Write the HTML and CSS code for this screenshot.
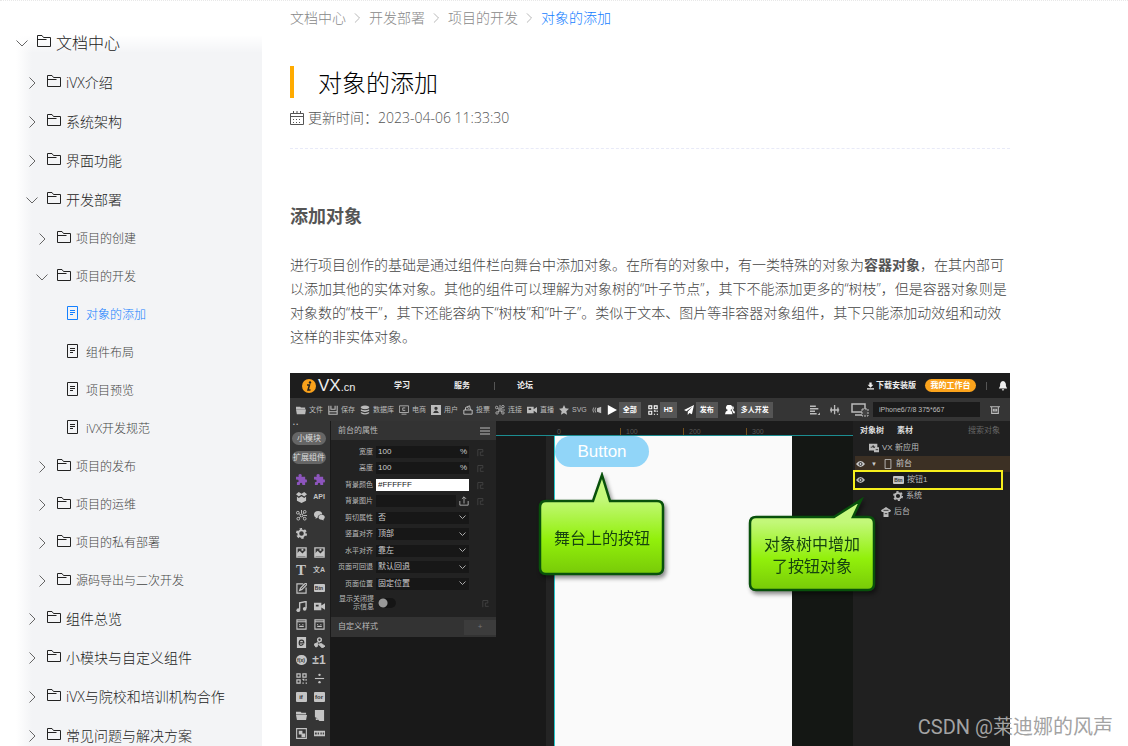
FILE: index.html
```
<!DOCTYPE html>
<html lang="zh">
<head>
<meta charset="utf-8">
<meta name="viewport" content="width=device-width, initial-scale=1">
<title>对象的添加</title>
<link rel="stylesheet" href="styles.css">
</head>
<body>
<svg class="defs" aria-hidden="true">
  <symbol id="folder" viewBox="0 0 14 14"><path d="M.5 1.500h4.500l1.500 2h7v9h-13zM.5 5.500h9" fill="none" stroke="currentColor"/></symbol>
  <symbol id="file" viewBox="0 0 14 14"><path d="M1.500.500h10v13h-10zM4 4.500h5M4 6.500h5M4 8.500h3" fill="none" stroke="currentColor"/></symbol>
  <symbol id="right" viewBox="0 0 12 12"><path d="M3.500 .5L9 6l-5.500 5.500" fill="none" stroke="currentColor"/></symbol>
  <symbol id="down" viewBox="0 0 12 12"><path d="M.5 3.500L6 9l5.500-5.500" fill="none" stroke="currentColor"/></symbol>
  <symbol id="s-folder" viewBox="0 0 12 12"><path d="M0 2h5l1 1h5v2H0zM0 5.500h12L11 11H1z" fill="currentColor"/></symbol>
  <symbol id="s-save" viewBox="0 0 12 12"><path d="M1 1v10h10V1M3.500 1v4h5V1M1 8h10" fill="none" stroke="currentColor" stroke-width="1.300"/></symbol>
  <symbol id="s-db" viewBox="0 0 12 12"><path d="M1 2q5-3 10 0v1.500q-5 3-10 0zM1 5q5 2.500 10 0v2q-5 2.500-10 0zM1 8.500q5 2.500 10 0V10q-5 3-10 0z" fill="currentColor"/></symbol>
  <symbol id="s-screen" viewBox="0 0 12 12"><path d="M.5 1h11v8H.5zM3 11h6M7.500 3.500h-3v3h3" fill="none" stroke="currentColor"/></symbol>
  <symbol id="s-user" viewBox="0 0 12 12"><path fill-rule="evenodd" d="M0 0h12v12H0zM6 2a2 2 0 000 4 2 2 0 000-4M2.500 9.500h7q-1-3-3.500-3t-3.500 3" fill="currentColor"/></symbol>
  <symbol id="s-vote" viewBox="0 0 12 12"><path d="M1 6h10v5H1zM3 6V3l5-2 1 5M5 3l2 1" fill="none" stroke="currentColor" stroke-width="1.200"/></symbol>
  <symbol id="s-link" viewBox="0 0 12 12"><g fill="none" stroke="currentColor"><circle cx="2" cy="3" r="1.500"/><circle cx="9.500" cy="2" r="1.500"/><circle cx="2.500" cy="9.500" r="1.500"/><circle cx="9.500" cy="9.500" r="1.500"/><circle cx="6" cy="6" r="1.500"/><path d="M3 4l2 1M7 5l1.500-2M5 7L3.500 8.500M7 7l1.500 1.500M8 6h4M6 0v4"/></g></symbol>
  <symbol id="s-live" viewBox="0 0 12 12"><path fill-rule="evenodd" d="M0 2h8v3l4-2.500v7L8 7v3H0zM2 4v2h3V4z" fill="currentColor"/></symbol>
  <symbol id="s-star" viewBox="0 0 12 12"><path d="M6 0l1.800 4 4.200.500-3.200 2.900.9 4.300L6 9.600l-3.700 2.100.9-4.300L0 4.500 4.200 4z" fill="currentColor"/></symbol>
  <symbol id="s-sound" viewBox="0 0 12 12"><path d="M2 3q-2 3 0 6M4.500 3q-2 3 0 6" fill="none" stroke="currentColor"/><path d="M11 2v8L6 8V4z" fill="currentColor"/></symbol>
  <symbol id="s-play" viewBox="0 0 12 12"><path d="M1 0l11 6-11 6z" fill="currentColor"/></symbol>
  <symbol id="s-qr" viewBox="0 0 12 12"><path d="M1 1h3.500v3.500H1zM7.500 1H11v3.500H7.500zM1 7.500h3.500V11H1zM7 7h1.500v1.500M11 6.500v2M7 11h1.500M10.500 11H12" fill="none" stroke="currentColor" stroke-width="1.300"/></symbol>
  <symbol id="s-plane" viewBox="0 0 12 12"><path d="M12 0L0 6l3 1.500L10 2 4.500 8v4L6.500 9.500 9.500 11z" fill="currentColor"/></symbol>
  <symbol id="s-people" viewBox="0 0 12 12"><path d="M5 0a3 3 0 00-1.500 6Q0 8 0 11h9Q9 8 6.500 6A3 3 0 005 0M9 1q3 2 .5 5Q12 7 12 10h-2Q9 7 8 6.500 9.500 4 9 1" fill="currentColor"/></symbol>
  <symbol id="s-align" viewBox="0 0 12 12"><path d="M0 1.500h7M0 4.500h10M0 7.500h6M0 10.500h8" stroke="currentColor" stroke-width="1.600"/><path d="M12 9v3H9z" fill="currentColor"/></symbol>
  <symbol id="s-dist" viewBox="0 0 12 12"><path d="M1.500 3v6M5.500 0v11M9.500 3v6M0 6h11" stroke="currentColor" stroke-width="1.600"/><path d="M12 10v2h-2z" fill="currentColor"/></symbol>
  <symbol id="s-device" viewBox="0 0 18 14"><path d="M1 1h13v8H1zM4 12h7" fill="none" stroke="currentColor" stroke-width="1.500"/><path d="M11 6h6v7h-6z" fill="#444" stroke="currentColor" stroke-dasharray="2 1"/></symbol>
  <symbol id="s-crop" viewBox="0 0 12 12"><path d="M0 2h12M2 2v8h8V2M4 5h4v2H4z" fill="none" stroke="currentColor" stroke-width="1.300"/></symbol>
  <symbol id="s-bell" viewBox="0 0 12 12"><path d="M6 0Q2 1 2.500 6L1 9h10L9.500 6Q10 1 6 0M4.500 10h3L6 12z" fill="currentColor"/></symbol>
  <symbol id="s-load" viewBox="0 0 12 12"><path d="M4 0h4v4h3L6 9 1 4h3zM0 10h12v2H0z" fill="currentColor"/></symbol>
  <symbol id="s-puzzle" viewBox="0 0 12 12"><path d="M0 3h3Q2 0 4.500 0T6 3h4v3q2-1 2 1.500T10 9v3H7q0-2.500-1.500-2.500T4 12H1V9q2 0 2-1.500T0 6z" fill="currentColor"/></symbol>
  <symbol id="s-box" viewBox="0 0 12 12"><path d="M3 0l3 2 3-2 3 2.500L9 5 6 3 3 5 0 2.500zM1 5l2 1.500 3-2 3 2L11 5v4.500L6 12 1 9.500z" fill="currentColor"/></symbol>
  <symbol id="s-chat" viewBox="0 0 12 12"><path d="M4.500 1C-1 1-1 7 2 8L1.500 9.500 4 8.500Q4 4.500 9 4.500 8.500 1 4.500 1M8.500 5.300c-5 0-4.500 5.500 0 5.200l2 1V10C13 8 11.500 5.300 8.500 5.300" fill="currentColor"/></symbol>
  <symbol id="s-gear" viewBox="0 0 12 12"><circle cx="6" cy="6" r="3.500" fill="none" stroke="currentColor" stroke-width="2"/><circle cx="6" cy="6" r="5" fill="none" stroke="currentColor" stroke-width="2" stroke-dasharray="2.600 2.636"/></symbol>
  <symbol id="s-pic" viewBox="0 0 12 12"><path d="M1 1h10v10H1z" fill="none" stroke="currentColor" stroke-width="1.500"/><path d="M1 10V7l3-3 3 3 3-3 1 1v5zM6 2h2v2H6z" fill="currentColor"/></symbol>
  <symbol id="s-edit" viewBox="0 0 12 12"><path d="M8 1H1v10h10V5M4 8l1-2.500L10.500 0 12 1.500 6.500 7z" fill="none" stroke="currentColor" stroke-width="1.300"/></symbol>
  <symbol id="s-note" viewBox="0 0 12 12"><path d="M4 9.500V2l7-1.500V8" fill="none" stroke="currentColor" stroke-width="1.500"/><circle cx="2.500" cy="10" r="2" fill="currentColor"/><circle cx="9.500" cy="8.500" r="2" fill="currentColor"/></symbol>
  <symbol id="s-window" viewBox="0 0 12 12"><path d="M1 1h10v10H1zM1 3h10M3.500 8h5M3.500 6h1M7 6h1" fill="none" stroke="currentColor" stroke-width="1.200"/></symbol>
  <symbol id="s-web" viewBox="0 0 12 12"><path d="M1 0h10v12H1z" fill="currentColor"/><path d="M3.500 6.500h5Q8.500 3.500 6 3.500T3.500 6.500 6 9l2-1" fill="none" stroke="#333" stroke-width="1.300"/></symbol>
  <symbol id="s-map" viewBox="0 0 12 12"><circle cx="6" cy="3" r="2" fill="none" stroke="currentColor" stroke-width="1.500"/><path d="M5.500 5v2M0 8l4-2v4l-2 1zM5 8l3-1 4 3-3 2z" fill="currentColor" stroke="currentColor"/></symbol>
  <symbol id="s-div" viewBox="0 0 12 12"><path d="M1 6h10" stroke="currentColor" stroke-width="1.200"/><circle cx="6" cy="2" r="1.300" fill="currentColor"/><circle cx="6" cy="10" r="1.300" fill="currentColor"/></symbol>
  <symbol id="s-paper" viewBox="0 0 12 12"><path d="M1 0h10v12H6L1 7.500zM2 8v3h3z" fill="currentColor"/></symbol>
  <symbol id="s-copy" viewBox="0 0 12 12"><path d="M.7.700h10.600v10.600H.7z" fill="none" stroke="currentColor" stroke-width="1.200"/><path d="M3 3h4v4H3zM6 6h4v4H6z" fill="currentColor"/></symbol>
  <symbol id="s-strip" viewBox="0 0 12 12"><path d="M0 3h12v6H0z" fill="currentColor"/><path d="M1 6h2M4 6h1.500M7 6h1.500M9.500 6H11" stroke="#444" stroke-width="2"/></symbol>
  <symbol id="s-eye" viewBox="0 0 12 12"><path d="M0 6q6-8 12 0-6 8-12 0" fill="currentColor"/><circle cx="6" cy="6" r="2" fill="none" stroke="#222" stroke-width="1.200"/></symbol>
  <symbol id="s-phone" viewBox="0 0 12 12"><path d="M2.500.500h7v11h-7z" fill="none" stroke="currentColor"/></symbol>
  <symbol id="s-app" viewBox="0 0 12 12"><path d="M0 1h10v4h2v6H6V9H0z" fill="currentColor"/><path d="M2 5h2l1-2 1 3 1-2M8 8h3" fill="none" stroke="#222"/></symbol>
  <symbol id="s-pot" viewBox="0 0 12 12"><path d="M0 4l6-4 6 4-1 2H1zM3 6h6v6H3z" fill="currentColor"/><path d="M3 4h6M4.500 8h3" stroke="#222"/></symbol>
  <symbol id="s-key" viewBox="0 0 12 12"><path d="M1 11V3M1 3h6v3H4v4h4" fill="none" stroke="currentColor"/></symbol>
  <symbol id="s-up" viewBox="0 0 12 12"><path d="M1 6v5h10V6M6 9V1M3.500 3.500L6 1l2.500 2.500" fill="none" stroke="currentColor"/></symbol>
</svg>

<div class="page">
  <nav class="sidebar" aria-label="文档目录">
    <ul class="tree">
      <li><a class="node root" href="#"><svg class="chev"><use href="#down"/></svg><svg class="ico"><use href="#folder"/></svg>文档中心</a>
        <ul class="l1">
          <li><a class="node" href="#"><svg class="chev"><use href="#right"/></svg><svg class="ico"><use href="#folder"/></svg>iVX介绍</a></li>
          <li><a class="node" href="#"><svg class="chev"><use href="#right"/></svg><svg class="ico"><use href="#folder"/></svg>系统架构</a></li>
          <li><a class="node" href="#"><svg class="chev"><use href="#right"/></svg><svg class="ico"><use href="#folder"/></svg>界面功能</a></li>
          <li><a class="node" href="#"><svg class="chev"><use href="#down"/></svg><svg class="ico"><use href="#folder"/></svg>开发部署</a>
            <ul class="l2">
              <li><a class="node" href="#"><svg class="chev"><use href="#right"/></svg><svg class="ico"><use href="#folder"/></svg>项目的创建</a></li>
              <li><a class="node" href="#"><svg class="chev"><use href="#down"/></svg><svg class="ico"><use href="#folder"/></svg>项目的开发</a>
                <ul class="l3">
                  <li><a class="node current" href="#" aria-current="page"><svg class="ico"><use href="#file"/></svg>对象的添加</a></li>
                  <li><a class="node" href="#"><svg class="ico"><use href="#file"/></svg>组件布局</a></li>
                  <li><a class="node" href="#"><svg class="ico"><use href="#file"/></svg>项目预览</a></li>
                  <li><a class="node" href="#"><svg class="ico"><use href="#file"/></svg>iVX开发规范</a></li>
                </ul>
              </li>
              <li><a class="node" href="#"><svg class="chev"><use href="#right"/></svg><svg class="ico"><use href="#folder"/></svg>项目的发布</a></li>
              <li><a class="node" href="#"><svg class="chev"><use href="#right"/></svg><svg class="ico"><use href="#folder"/></svg>项目的运维</a></li>
              <li><a class="node" href="#"><svg class="chev"><use href="#right"/></svg><svg class="ico"><use href="#folder"/></svg>项目的私有部署</a></li>
              <li><a class="node" href="#"><svg class="chev"><use href="#right"/></svg><svg class="ico"><use href="#folder"/></svg>源码导出与二次开发</a></li>
            </ul>
          </li>
          <li><a class="node" href="#"><svg class="chev"><use href="#right"/></svg><svg class="ico"><use href="#folder"/></svg>组件总览</a></li>
          <li><a class="node" href="#"><svg class="chev"><use href="#right"/></svg><svg class="ico"><use href="#folder"/></svg>小模块与自定义组件</a></li>
          <li><a class="node" href="#"><svg class="chev"><use href="#right"/></svg><svg class="ico"><use href="#folder"/></svg>iVX与院校和培训机构合作</a></li>
          <li><a class="node" href="#"><svg class="chev"><use href="#right"/></svg><svg class="ico"><use href="#folder"/></svg>常见问题与解决方案</a></li>
        </ul>
      </li>
    </ul>
  </nav>

  <main class="content">
    <nav class="crumbs" aria-label="面包屑">
      <a href="#">文档中心</a><svg><use href="#right"/></svg><a href="#">开发部署</a><svg><use href="#right"/></svg><a href="#">项目的开发</a><svg><use href="#right"/></svg><a class="current" href="#">对象的添加</a>
    </nav>
    <h1>对象的添加</h1>
    <p class="updated"><svg viewBox="0 0 14 14"><path d="M.5 2.500h13v11H.5zM.5 5.500h13M3.500 0v3M7 0v3M10.500 0v3" fill="none" stroke="currentColor"/><path d="M3 8.500h8M3 11.500h8" fill="none" stroke="currentColor" stroke-dasharray="1 2"/></svg>更新时间：2023-04-06 11:33:30</p>
    <h2>添加对象</h2>
    <p class="intro">进行项目创作的基础是通过组件栏向舞台中添加对象。在所有的对象中，有一类特殊的对象为<strong>容器对象</strong>，在其内部可以添加其他的实体对象。其他的组件可以理解为对象树的“叶子节点”，其下不能添加更多的“树枝”，但是容器对象则是对象数的“枝干”，其下还能容纳下“树枝”和“叶子”。类似于文本、图片等非容器对象组件，其下只能添加动效组和动效这样的非实体对象。</p>

    <div class="shot">
      <header class="top">
        <div class="logo"><svg viewBox="0 0 14 14"><circle cx="7" cy="7" r="7" fill="#f9a11b"/><circle cx="8" cy="3.500" r="1.200" fill="#222"/><path d="M5 6h2.500L6 11h2.500" fill="none" stroke="#222" stroke-width="1.500"/></svg><b>VX</b><span>.cn</span></div>
        <a href="#">学习</a><a href="#">服务</a><i></i><a href="#">论坛</a>
        <div class="account"><a href="#"><svg><use href="#s-load"/></svg>下载安装版</a><button class="bench">我的工作台</button><i></i><svg class="bell"><use href="#s-bell"/></svg></div>
      </header>
      <div class="bar">
        <span><svg><use href="#s-folder"/></svg>文件</span><span><svg><use href="#s-save"/></svg>保存</span><span><svg><use href="#s-db"/></svg>数据库</span><span><svg><use href="#s-screen"/></svg>电商</span><span><svg><use href="#s-user"/></svg>用户</span><span><svg><use href="#s-vote"/></svg>投票</span><span><svg><use href="#s-link"/></svg>连接</span><span><svg><use href="#s-live"/></svg>直播</span><span><svg><use href="#s-star"/></svg>SVG</span><span><svg><use href="#s-sound"/></svg></span>
        <span class="lit"><svg><use href="#s-play"/></svg><button>全部</button></span><span class="lit"><svg><use href="#s-qr"/></svg><button>H5</button></span><span class="lit"><svg><use href="#s-plane"/></svg><button>发布</button></span><span class="lit"><svg><use href="#s-people"/></svg><button>多人开发</button></span>
        <div class="view"><svg><use href="#s-align"/></svg><svg><use href="#s-dist"/></svg><svg class="device"><use href="#s-device"/></svg><input aria-label="设备" value="iPhone6/7/8 375*667"><svg><use href="#s-crop"/></svg></div>
      </div>
      <div class="body">
        <aside class="tools">
          <div class="dots">• •</div>
          <button>小模块</button><button>扩展组件</button>
          <div class="set">
            <svg class="violet"><use href="#s-puzzle"/></svg><svg class="violet"><use href="#s-puzzle"/></svg>
            <svg><use href="#s-box"/></svg><b>API</b>
            <svg><use href="#s-link"/></svg><svg><use href="#s-chat"/></svg>
            <svg><use href="#s-gear"/></svg>
          </div>
          <div class="set">
            <svg><use href="#s-pic"/></svg><svg><use href="#s-pic"/></svg>
            <b class="big serif">T</b><b class="zh">文A</b>
            <svg><use href="#s-edit"/></svg><b class="chip">Btn</b>
            <svg><use href="#s-note"/></svg><svg><use href="#s-live"/></svg>
            <svg><use href="#s-window"/></svg><svg><use href="#s-window"/></svg>
            <svg><use href="#s-web"/></svg><svg><use href="#s-map"/></svg>
            <b class="chip round">f(x)</b><b class="big">±1</b>
            <svg><use href="#s-qr"/></svg><svg><use href="#s-div"/></svg>
          </div>
          <div class="set">
            <b class="chip tall">if</b><b class="chip tall">for</b>
            <svg><use href="#s-folder"/></svg><svg><use href="#s-paper"/></svg>
            <svg><use href="#s-copy"/></svg><svg><use href="#s-strip"/></svg>
            <svg><use href="#s-pot"/></svg>
          </div>
        </aside>
        <section class="props">
          <h3>前台的属性<svg viewBox="0 0 10 8"><path d="M0 1h10M0 4h10M0 7h10" stroke="currentColor"/></svg></h3>
          <div class="fields">
            <label><span>宽度</span><span class="box"><input value="100">%</span><svg><use href="#s-key"/></svg></label>
            <label><span>高度</span><span class="box"><input value="100">%</span><svg><use href="#s-key"/></svg></label>
            <label><span>背景颜色</span><span class="box white"><input value="#FFFFFF"></span><svg><use href="#s-key"/></svg></label>
            <label><span>背景图片</span><span class="pick"><input class="box"><svg class="upload"><use href="#s-up"/></svg></span><svg><use href="#s-key"/></svg></label>
            <label><span>剪切属性</span><select class="box"><option>否</option></select></label>
            <label><span>竖直对齐</span><select class="box"><option>顶部</option></select></label>
            <label><span>水平对齐</span><select class="box"><option>靠左</option></select></label>
            <label><span>页面可回退</span><select class="box"><option>默认回退</option></select></label>
            <label><span>页面位置</span><select class="box"><option>固定位置</option></select></label>
          </div>
          <label class="toggle"><span>显示关闭提示信息</span><input type="checkbox"><svg><use href="#s-key"/></svg></label>
          <div class="custom">自定义样式<button aria-label="添加样式">+</button></div>
        </section>
        <section class="stage">
          <div class="hruler"><span>0</span><span>100</span><span>200</span><span>300</span></div>
          <div class="vruler"></div>
          <div class="paper"><button>Button</button></div>
        </section>
        <aside class="objects">
          <div class="tabs"><b>对象树</b><b>素材</b><span>搜索对象</span></div>
          <ul>
            <li><i></i><svg><use href="#s-app"/></svg>VX 新应用</li>
            <li class="brown"><i><svg><use href="#s-eye"/></svg></i><em>▼</em><svg><use href="#s-phone"/></svg>前台</li>
            <li class="deep picked"><i><svg><use href="#s-eye"/></svg></i><b class="chip">Btn</b>按钮1</li>
            <li class="deep"><i></i><svg><use href="#s-gear"/></svg>系统</li>
            <li class="mid"><i></i><svg><use href="#s-pot"/></svg>后台</li>
          </ul>
        </aside>
      </div>
      <div class="callout one"><svg viewBox="0 0 128 106"><defs><linearGradient id="lime" x1="0" y1="0" x2="0" y2="1"><stop offset="0" stop-color="#cbfa86"/><stop offset=".25" stop-color="#c2f878"/><stop offset=".65" stop-color="#92f00b"/><stop offset="1" stop-color="#78ca08"/></linearGradient></defs><path d="M8 29H55L64 3l8 26h47q6 0 6 6v61q0 6-6 6H8q-6 0-6-6V35q0-6 6-6z" fill="url(#lime)" stroke="#08510b" stroke-width="2.500"/></svg><p>舞台上的按钮</p></div>
      <div class="callout two"><svg viewBox="0 0 128 96"><path d="M8 20H86L113 3l-8 17h15q6 0 6 6v61q0 6-6 6H8q-6 0-6-6V26q0-6 6-6z" fill="url(#lime)" stroke="#08510b" stroke-width="2.500"/></svg><p>对象树中增加<br>了按钮对象</p></div>
    </div>
  </main>
  <div class="watermark">CSDN @莱迪娜的风声</div>
</div>
</body>
</html>
```

FILE: styles.css
```
* { box-sizing: border-box; }
body { margin: 0; background: #fff; color: #555; font: 14px/24px "Open Sans", "Noto Sans CJK SC", sans-serif; font-weight: 300; }
a { color: inherit; text-decoration: none; }
ul { list-style: none; margin: 0; padding: 0; }
h1, h2, h3, p { margin: 0; }
button, input, select { font: inherit; color: inherit; border: 0; padding: 0; margin: 0; min-width: 0; }
svg { flex: none; }
.defs { position: absolute; width: 0; height: 0; }

.page { position: relative; display: flex; height: 100vh; overflow: hidden; border-top: 1px dotted #e8e8e8; }

/* Directory */
.sidebar { flex: 0 0 262px; padding-top: 22px; color: #222;
  background: linear-gradient(#fff 34px, rgba(255,255,255,0) 52px), linear-gradient(90deg, #fff 16px, #f3f4f6 32px); }
.node { display: flex; align-items: center; height: 39px; padding-left: 26px; white-space: nowrap; }
.node .chev { width: 12px; height: 12px; margin-right: 9px; color: #666; }
.node .ico { width: 14px; height: 14px; margin: 0 5px 4px 0; color: #222; }
.root { height: 40px; padding-left: 16px; font-size: 16px; }
.l2 { padding-top: 1px; margin-bottom: -1px; }
.l2 .node { height: 38px; padding-left: 36px; font-size: 12px; color: #444; }
.l3 .node { padding-left: 66px; }
.l3 .ico { margin-right: 6px; }
.l3 .current, .l3 .current .ico { color: #1480ff; }

/* Article */
.content { flex: 1; min-width: 0; padding: 6px 118px 0 28px; }
.crumbs { display: flex; align-items: center; height: 22px; color: #888; }
.crumbs svg { width: 10px; height: 10px; margin: 0 7px 0 6px; color: #aaa; }
.crumbs .current { color: #1480ff; }
h1 { margin-top: 37px; padding: 2px 0 0 24px; border-left: 4px solid #ffab00; color: #000; font-size: 24px; line-height: 30px; font-weight: 300; }
.updated { display: flex; align-items: center; gap: 4px; margin-top: 8px; padding-bottom: 18px; border-bottom: 1px dashed #e8eaf8; }
.updated svg { width: 14px; height: 14px; }
h2 { margin-top: 53px; font-size: 18px; line-height: 28px; color: #555; }
.intro { margin-top: 23px; color: #444; }
.intro strong { font-weight: 700; color: #555; }

/* Editor illustration */
.shot { position: relative; height: 520px; margin-top: 24px; overflow: hidden; background: #191919; color: #bbb; font: 7px/10px "Liberation Sans", "Noto Sans CJK SC", sans-serif; }
.shot svg { width: 10px; height: 10px; }
.top { display: flex; align-items: center; height: 25px; padding-left: 12px; background: #1d1d1d; color: #eee; font-size: 8px; font-weight: 700; }
.top > a { width: 18px; margin-right: 42px; }
.top i { width: 1px; height: 8px; background: #555; margin-right: 22px; }
.top > i { margin-left: -20px; }
.logo { display: flex; align-items: center; width: 92px; font-size: 17px; font-weight: 400; }
.logo b { margin-left: 2px; font-weight: 400; }
.logo svg { width: 14px; height: 14px; }
.logo span { font-size: 11px; padding-top: 3px; }
.account { display: flex; align-items: center; margin-left: auto; padding-right: 2px; }
.account a { display: flex; align-items: center; gap: 2px; }
.account a svg { width: 7px; height: 8px; }
.account i { margin: 0 11px 0 10px; }
.bench { height: 13px; width: 51px; margin-left: 9px; border-radius: 7px; background: #fba31c; color: #fff; }
.bar { display: flex; align-items: center; gap: 5px; height: 23px; padding-left: 6px; background: #353535; white-space: nowrap; }
.bar span { display: flex; align-items: center; gap: 3px; }
.bar .lit { gap: 2px; margin-right: 2px; color: #fff; font-weight: 700; }
.lit button { height: 16px; padding: 0 4px; background: #555; }
.view { display: flex; align-items: center; margin-left: auto; gap: 10px; padding-right: 10px; }
.view .device { width: 18px; height: 14px; margin: 0 -6px 0 1px; }
.view input { width: 107px; height: 15px; padding-left: 6px; background: #1b1b1b; }
.body { display: grid; grid-template-columns: 40px 166px 1fr 157px; height: 472px; }

.tools { background: #353535; text-align: center; }
.dots { height: 11px; line-height: 7px; font-size: 5px; text-align: left; padding-left: 3px; }
.tools button { display: block; width: 34px; height: 13px; margin: 0 0 6px 2px; border-radius: 7px; background: #666; color: #ddd; font-size: 8px; line-height: 13px; }
.set { display: grid; grid-template-columns: 18px 18px; grid-auto-rows: 18px; place-items: center; padding-left: 2px; margin-bottom: 1px; color: #c4c4c4; }
.set .violet { color: #8d55bd; }
.set svg { width: 11px; height: 11px; }
.big { font-size: 12px; }
.serif { font-family: "Liberation Serif", serif; font-size: 15px; }
.chip { width: 11px; height: 8px; border-radius: 1px; background: #c4c4c4; color: #333; font-size: 5px; line-height: 8px; text-align: center; }
.round { height: 10px; line-height: 10px; border-radius: 5px; }
.tall { height: 10px; line-height: 10px; font-size: 6px; }

.props { height: 216px; background: #222; border-left: 1px solid #1a1a1a; }
.props h3 { display: flex; align-items: center; justify-content: space-between; height: 19px; padding: 0 6px 0 7px; background: #333; font-size: 8px; font-weight: 400; }
.fields { display: flex; flex-direction: column; justify-content: space-between; height: 145px; margin-top: 5px; }
.fields label { display: grid; grid-template-columns: 42px 93px 12px; column-gap: 3px; align-items: center; height: 13px; }
.fields label > span:first-child { text-align: right; }
.fields label > svg { margin-left: 5px; color: #444; }
.box { display: flex; width: 93px; height: 12px; padding: 0 2px; background: #171717; color: #ccc; font-size: 8px; line-height: 12px; align-items: center; }
.box input { flex: 1; background: none; }
.white { background: #fff; color: #222; }
.pick { display: flex; align-items: center; gap: 3px; }
.pick .box { flex: 1; }
select.box { appearance: none; background: #171717 url("data:image/svg+xml,%3Csvg xmlns='http://www.w3.org/2000/svg' width='7' height='5'%3E%3Cpath d='M.5.5l3 3 3-3' fill='none' stroke='%23aaa'/%3E%3C/svg%3E") no-repeat right 3px center; }
.toggle { display: flex; align-items: center; gap: 4px; height: 26px; }
.toggle span { width: 43px; padding-left: 7px; line-height: 8px; text-align: right; }
.toggle input { appearance: none; width: 18px; height: 10px; border-radius: 5px; background: radial-gradient(circle at 5px 5px, #999 4px, #151515 5px); }
.toggle svg { margin-left: 82px; color: #444; }
.custom { display: flex; justify-content: space-between; align-items: center; height: 20px; margin-top: 1px; padding-left: 7px; background: #333; font-size: 8px; }
.custom button { width: 32px; height: 15px; background: #3c3c3c; color: #777; }

.stage { display: grid; grid-template-columns: 50px 8px 238px 1fr; grid-template-rows: 15px 1fr; background: linear-gradient(90deg, transparent 296px, #141714 296px), #191919; }
.hruler { grid-column: 1 / -1; display: flex; padding: 7px 0 0 61px; border-bottom: 1px solid #1c8d91; background: #1b1b1b; color: #555; line-height: 8px; }
.hruler span { width: 63px; }
.hruler span + span { padding-left: 5px; border-left: 1px solid #74501c; }
.vruler { grid-column: 2; background: #242424; }
.paper { border-left: 1px solid #25c7cc; background: #fafafa; }
.paper button { width: 94px; height: 31px; border-radius: 16px; background: #91d5f8; color: #fff; font-size: 17px; }

.objects { padding: 0 0 0 2px; background: #202020; font-size: 8px; }
.tabs { display: flex; align-items: center; height: 19px; padding: 0 10px 0 5px; gap: 13px; color: #ddd; }
.tabs span { margin-left: auto; color: #666; }
.objects li { display: flex; align-items: center; gap: 3px; height: 16px; }
.objects li i { display: flex; width: 10px; margin-left: 1px; }
.objects li i svg { width: 9px; }
.objects em { width: 9px; font-size: 6px; font-style: normal; margin-left: 2px; }
.brown { background: #3c3024; color: #ccc; }
.objects .deep i { margin-right: 24px; }
.objects .mid i { margin-right: 12px; }
.objects .picked { margin-right: 9px; outline: 2px solid #f5ee1c; background: #1a1a1a; }

.callout { position: absolute; width: 128px; color: #174410; font-size: 16px; line-height: 22px; text-align: center; filter: drop-shadow(2px 3px 2px rgba(0,0,0,.45)); }
.callout svg { display: block; width: 100%; height: auto; }
.callout p { position: absolute; left: 0; right: 0; }
.one { left: 248px; top: 99px; }
.one p { top: 56px; }
.two { left: 458px; top: 124px; }
.two p { top: 37px; }

.watermark { position: absolute; right: 15px; bottom: 6px; color: #a3a3a3; font: 20px/26px Roboto, "Noto Sans CJK SC", sans-serif; }
```
